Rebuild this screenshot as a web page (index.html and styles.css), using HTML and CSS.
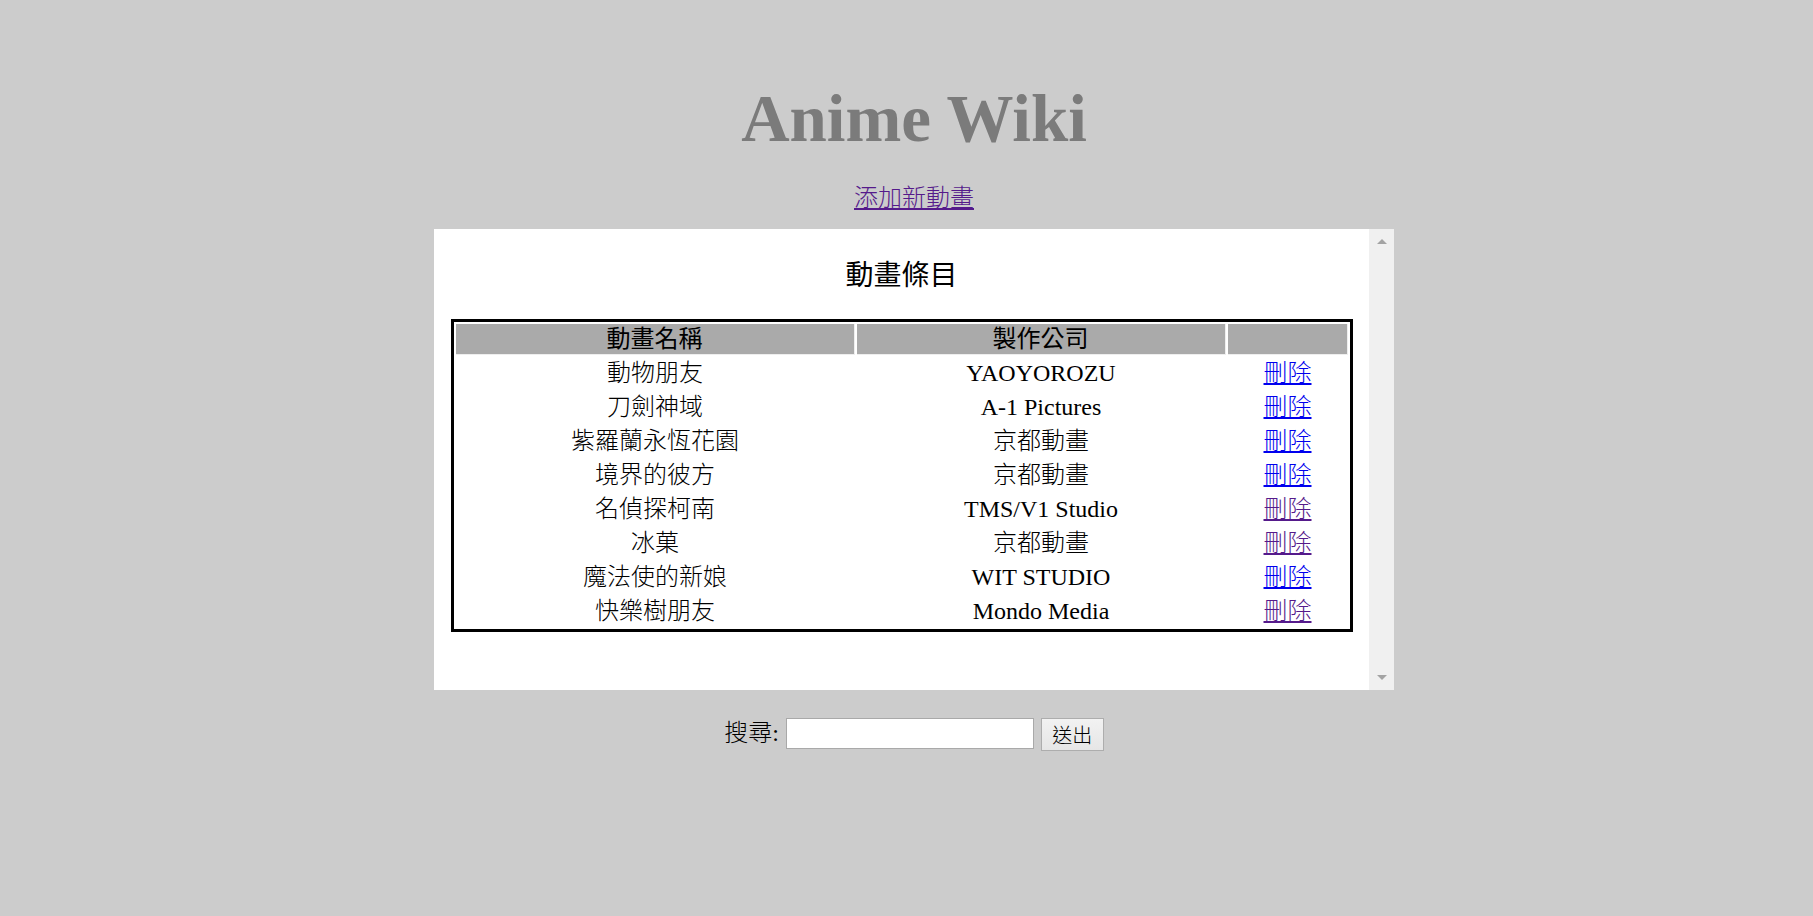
FILE: index.html
```html
<!DOCTYPE html>
<html lang="zh-Hant">
<head>
<meta charset="utf-8">
<title>Anime Wiki</title>
<link rel="stylesheet" href="styles.css">
</head>
<body>
<h1 class="title">Anime Wiki</h1>
<div class="add"><a class="link visited" href="#">添加新動畫</a></div>
<div class="panel">
  <div class="panel-content">
    <h3 class="panel-title">動畫條目</h3>
    <table class="anime-table">
      <tr><th class="col-name">動畫名稱</th><th class="col-studio">製作公司</th><th class="col-action"></th></tr>
      <tr><td>動物朋友</td><td>YAOYOROZU</td><td><a class="link" href="#">刪除</a></td></tr>
      <tr><td>刀劍神域</td><td>A-1 Pictures</td><td><a class="link" href="#">刪除</a></td></tr>
      <tr><td>紫羅蘭永恆花園</td><td>京都動畫</td><td><a class="link" href="#">刪除</a></td></tr>
      <tr><td>境界的彼方</td><td>京都動畫</td><td><a class="link" href="#">刪除</a></td></tr>
      <tr><td>名偵探柯南</td><td>TMS/V1 Studio</td><td><a class="link visited" href="#">刪除</a></td></tr>
      <tr><td>冰菓</td><td>京都動畫</td><td><a class="link visited" href="#">刪除</a></td></tr>
      <tr><td>魔法使的新娘</td><td>WIT STUDIO</td><td><a class="link" href="#">刪除</a></td></tr>
      <tr><td>快樂樹朋友</td><td>Mondo Media</td><td><a class="link visited" href="#">刪除</a></td></tr>
    </table>
  </div>
  <div class="scrollbar">
    <div class="sb-btn"><span class="arrow-up"></span></div>
    <div class="sb-btn"><span class="arrow-down"></span></div>
  </div>
</div>
<form class="search">
  <label class="search-label" for="q">搜尋:</label>
  <input class="search-input" id="q" type="text">
  <button class="search-btn" type="button">送出</button>
</form>
</body>
</html>
```
FILE: styles.css
```css
body {
  margin: 0 0 0 15px;
  background: #cccccc;
  font-family: "Liberation Serif", "Noto Sans CJK TC", serif;
  font-size: 24px;
  font-weight: 300;
  color: #000;
}

.title {
  margin: 78px 0 0;
  font-size: 67px;
  line-height: 80px;
  font-weight: bold;
  color: #7b7b7b;
  text-align: center;
}

.add {
  margin-top: 25px;
  line-height: 30px;
  text-align: center;
}

.link {
  color: #0000ee;
  text-decoration: underline;
}

.link.visited {
  color: #551a8b;
}

.panel {
  margin: 16px auto 0;
  width: 960px;
  height: 461px;
  background: #fff;
  display: flex;
}

.panel-content {
  flex: 1;
  display: flex;
  flex-direction: column;
  align-items: center;
}

.panel-title {
  margin: 30px 0 0;
  font-size: 28px;
  line-height: 34px;
  font-weight: 400;
}

.anime-table {
  margin-top: 26px;
  border: 3px solid #000;
  border-collapse: separate;
  border-spacing: 2px;
}

.anime-table th,
.anime-table td {
  box-sizing: border-box;
  padding: 0;
  text-align: center;
  vertical-align: middle;
}

.anime-table th {
  background: #aaaaaa;
  border-right: 1px solid #eeeeee;
  border-bottom: 1px solid #eeeeee;
  line-height: 30px;
  font-weight: 400;
}

.anime-table td {
  line-height: 32px;
}

.col-name { width: 399px; }
.col-studio { width: 369px; }
.col-action { width: 120px; }

.scrollbar {
  width: 25px;
  background: #f0f0f0;
  display: flex;
  flex-direction: column;
  justify-content: space-between;
}

.sb-btn {
  height: 25px;
  display: flex;
  align-items: center;
  justify-content: center;
}

.arrow-up {
  width: 0;
  height: 0;
  border-left: 5px solid transparent;
  border-right: 5px solid transparent;
  border-bottom: 5px solid #a3a3a3;
}

.arrow-down {
  width: 0;
  height: 0;
  border-left: 5px solid transparent;
  border-right: 5px solid transparent;
  border-top: 5px solid #a3a3a3;
}

.search {
  margin: 28px 0 0;
  display: flex;
  justify-content: center;
  align-items: flex-start;
  gap: 7px;
}

.search-label {
  line-height: 31px;
}

.search-input {
  box-sizing: border-box;
  width: 248px;
  height: 31px;
  margin: 0;
  border: 1px solid #a9a9a9;
  background: #fff;
  padding: 0 4px;
}

.search-btn {
  box-sizing: border-box;
  width: 63px;
  height: 33px;
  margin: 0;
  padding: 0;
  border: 1px solid #adadad;
  background: linear-gradient(#f2f2f2, #e6e6e6);
  font-family: "Noto Sans CJK TC", sans-serif;
  font-size: 20px;
  font-weight: 300;
  color: #000;
  line-height: 31px;
}
```
